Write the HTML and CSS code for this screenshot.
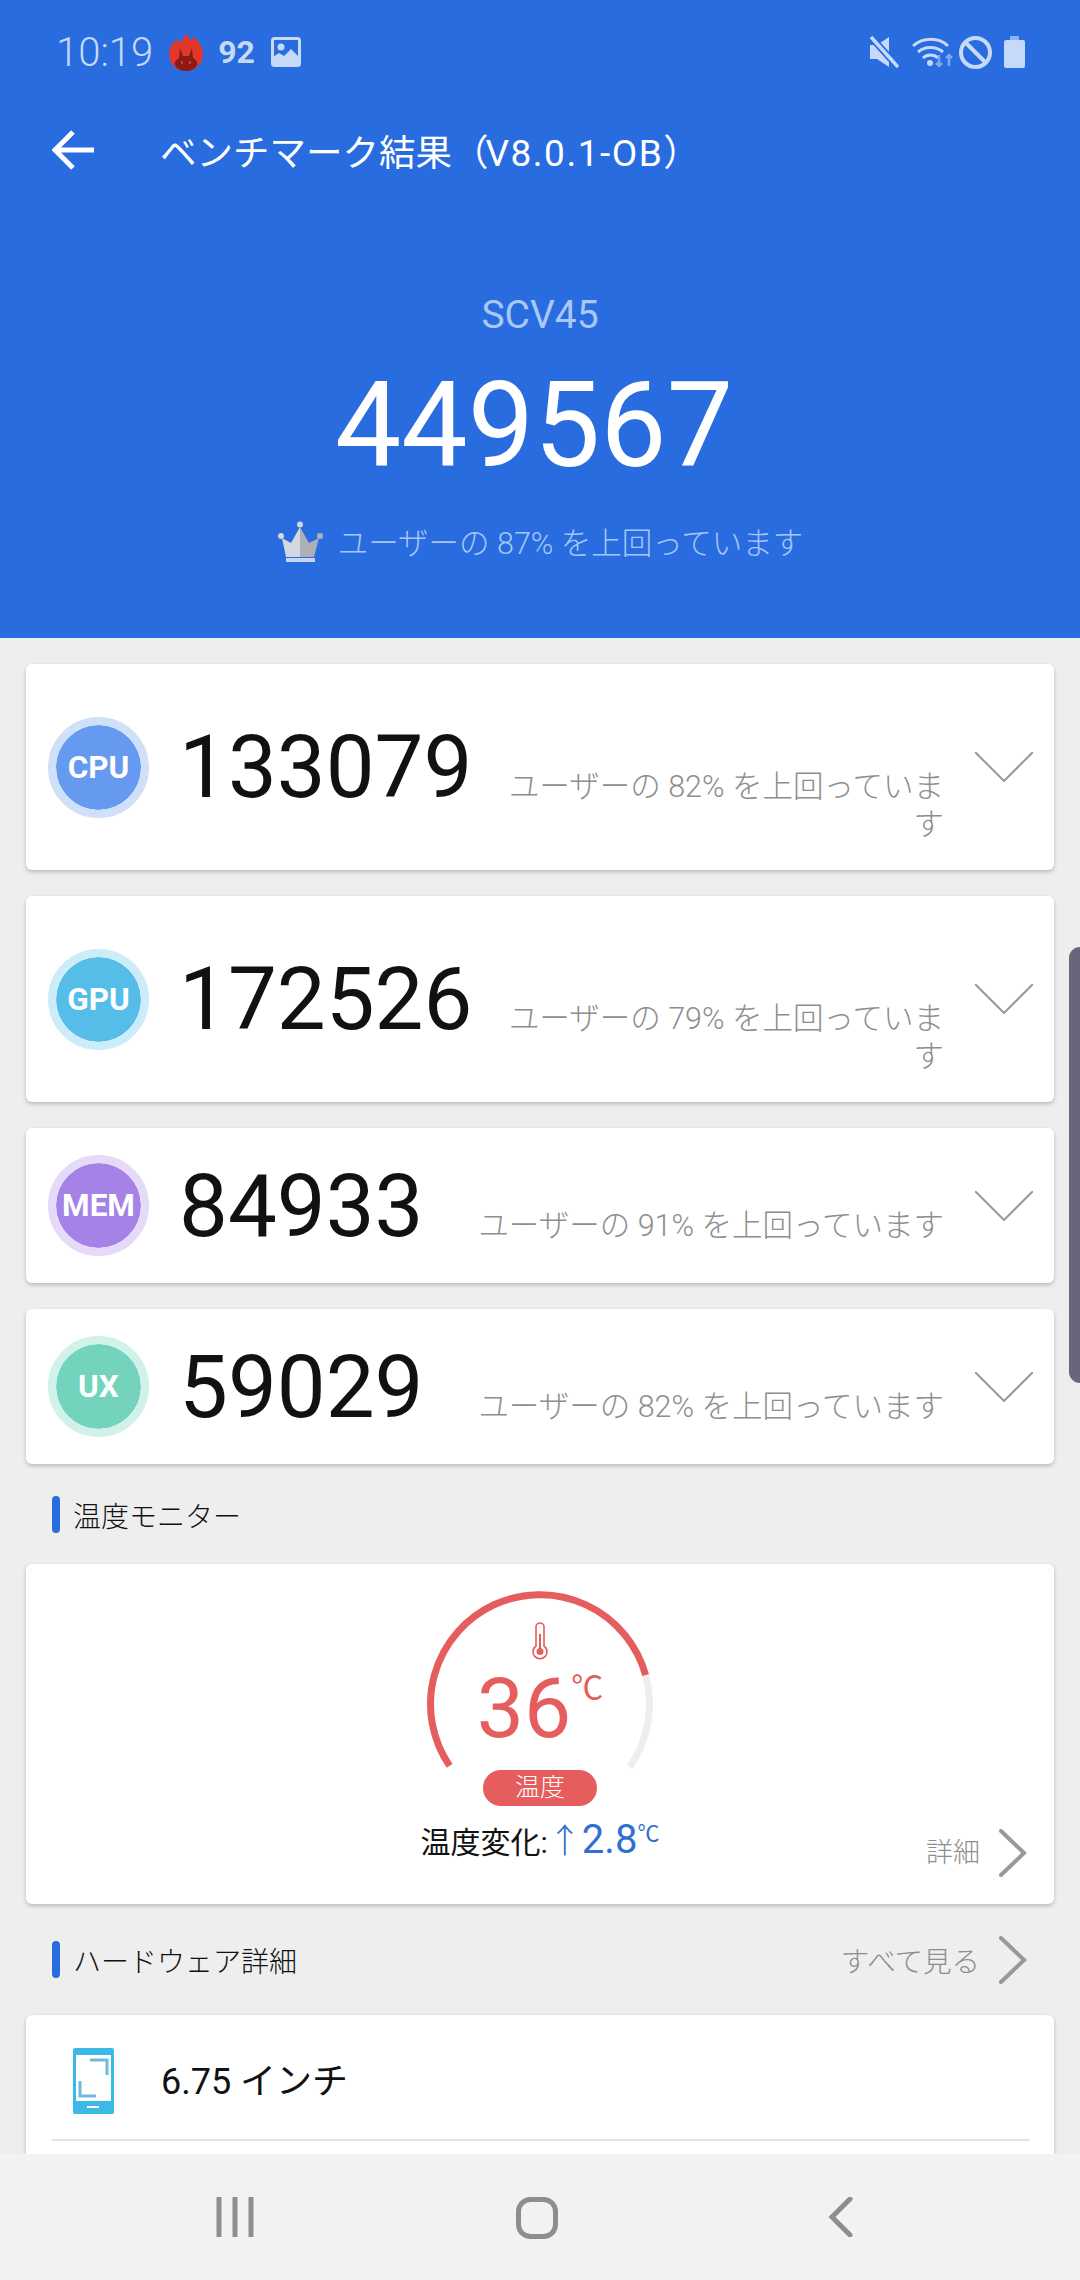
FILE: index.html
```html
<!doctype html>
<html lang="ja">

<head>
    <meta charset="utf-8" />
    <title>ベンチマーク結果</title>

    <link rel="stylesheet" href="styles.css">
</head>

<body>
    <header class="top">
        <div class="status">
            <span class="time">10:19</span>
            <svg class="ic-flame" viewBox="0 0 34 38">
                <path fill="#e2382b" d="M17 0c1 3 3 5 5 7 1-1 2-2 2-3 6 4 10 10 10 17 0 10-8 17-17 17S0 31 0 21C0 14 4 9 9 6c0 2 1 3 2 4 2-3 5-6 6-10z" />
                <path fill="#8c1a14" d="M11 15l3 8h6l3-8 1 10c3 2 5 4 4 7-2 4-6 6-11 6S8 36 6 32c-1-3 1-5 4-7z" />
                <path fill="#e2382b" d="M12 28h2v3h-2zM20 28h2v3h-2z" />
            </svg>
            <span class="level">92</span>
            <svg class="ic-image" viewBox="0 0 30 30">
                <rect x="1.5" y="1.5" width="27" height="27" rx="2" fill="none" stroke="#c6d9f8" stroke-width="3" />
                <circle cx="10" cy="10" r="3.5" fill="#c6d9f8" />
                <path fill="#c6d9f8" d="M2 26v-6l6-4 5 3 7-7 8 8v8H4z" />
            </svg>
            <span class="spacer"></span>
            <svg class="ic-mute" viewBox="0 0 30 34">
                <path fill="#c6d9f8" d="M1 10h7l12-8v30L8 24H1z" />
                <path stroke="#286cdf" stroke-width="7" d="M2 2l27 30" />
                <path stroke="#c6d9f8" stroke-width="3.5" d="M2 2l27 30" />
            </svg>
            <svg class="ic-wifi" viewBox="0 0 42 30">
                <g fill="none" stroke="#c6d9f8" stroke-width="3">
                    <path d="M1 9c10-9 26-9 35 0" />
                    <path d="M6 15c7-6 18-6 25 0" />
                    <path d="M11 21c4-4 11-4 15 0" />
                </g>
                <circle cx="18" cy="26" r="3" fill="#c6d9f8" />
                <path fill="none" stroke="#7fa9ee" stroke-width="2.5" d="M27 18v11m-3-3l3 3 3-3M37 29V18m-3 3l3-3 3 3" />
            </svg>
            <svg class="ic-block" viewBox="0 0 33 33">
                <circle cx="16.5" cy="16.5" r="14.5" fill="none" stroke="#c6d9f8" stroke-width="4" />
                <path stroke="#c6d9f8" stroke-width="4" d="M6 6l21 21" />
            </svg>
            <svg class="ic-battery" viewBox="0 0 21 32">
                <path fill="#8fb2ee" d="M6 0h9v4H6z" />
                <rect y="4" width="21" height="28" rx="2" fill="#c6d9f8" />
            </svg>
        </div>

        <div class="titlebar">
            <svg class="ic-back" viewBox="0 0 42 40">
                <path fill="none" stroke="#fff" stroke-width="5" d="M21 2L3 20l18 18M3 20h39" />
            </svg>
            <span class="title">ベンチマーク結果（<span class="title-ver">V8.0.1-OB</span>）</span>
        </div>

        <div class="device">SCV45</div>
        <div class="total">449567</div>
        <div class="rank">
            <svg class="ic-crown" viewBox="0 0 46 41">
                <circle cx="23" cy="3.5" r="3" fill="#d4d7df" />
                <circle cx="4" cy="15" r="3" fill="#d4d7df" />
                <circle cx="43" cy="15" r="3" fill="#adafb6" />
                <path fill="#d6d8df" d="M5 17l9 5 9-16v30H9z" />
                <path fill="#adafb6" d="M23 6l9 16 10-5-5 19H23z" />
                <path fill="#c5d6f4" d="M9 37h29v4H9z" />
            </svg>
            <span>ユーザーの 87% を上回っています</span>
        </div>
    </header>

    <main class="content">
        <div class="scores">
            <div class="card score-card score-tall">
                <div class="badge badge-cpu">CPU</div>
                <div class="score-row">
                    <span class="score-num">133079</span>
                    <span class="score-sub">ユーザーの 82% を上回っています</span>
                </div>
                <svg class="ic-down" viewBox="0 0 58 30"><path d="M0 0l29 29L58 0" /></svg>
            </div>
            <div class="card score-card score-tall">
                <div class="badge badge-gpu">GPU</div>
                <div class="score-row">
                    <span class="score-num">172526</span>
                    <span class="score-sub">ユーザーの 79% を上回っています</span>
                </div>
                <svg class="ic-down" viewBox="0 0 58 30"><path d="M0 0l29 29L58 0" /></svg>
            </div>
            <div class="card score-card">
                <div class="badge badge-mem">MEM</div>
                <div class="score-row">
                    <span class="score-num">84933</span>
                    <span class="score-sub">ユーザーの 91% を上回っています</span>
                </div>
                <svg class="ic-down" viewBox="0 0 58 30"><path d="M0 0l29 29L58 0" /></svg>
            </div>
            <div class="card score-card">
                <div class="badge badge-ux">UX</div>
                <div class="score-row">
                    <span class="score-num">59029</span>
                    <span class="score-sub">ユーザーの 82% を上回っています</span>
                </div>
                <svg class="ic-down" viewBox="0 0 58 30"><path d="M0 0l29 29L58 0" /></svg>
            </div>
        </div>

        <div class="section section-temp">
            <span class="section-title">温度モニター</span>
        </div>

        <div class="card temp-card">
            <div class="gauge">
                <svg class="gauge-arc" viewBox="0 0 240 182">
                    <path fill="none" stroke="#eeeeee" stroke-width="7" d="M225.6 87.1A109.5 109.5 0 0 1 209.7 178.8" />
                    <path fill="none" stroke="#e55d5d" stroke-width="7" d="M29.6 177.9A109.5 109.5 0 1 1 225.6 87.1" />
                    <path fill="none" stroke="#e55d5d" stroke-width="1.6" d="M116 58V39a4 4 0 0 1 8 0v19a7 7 0 1 1-8 0z" />
                    <path stroke="#e55d5d" stroke-width="2" d="M120 46v16" />
                    <circle cx="120" cy="63.5" r="3.5" fill="#e55d5d" />
                </svg>
                <div class="temp-value">36<span class="temp-unit">℃</span></div>
            </div>
            <div class="temp-pill">温度</div>
            <div class="temp-foot">
                <span class="temp-change">温度変化:<span class="temp-delta"><span class="delta-arrow">↑</span>2.8<span class="delta-unit">℃</span></span></span>
                <span class="link link-detail">詳細
                    <svg class="ic-next" viewBox="0 0 28 48"><path d="M2 2l23 22L2 46" /></svg>
                </span>
            </div>
        </div>

        <div class="section section-hw">
            <span class="section-title">ハードウェア詳細</span>
            <span class="link link-all">すべて見る
                <svg class="ic-next" viewBox="0 0 28 48"><path d="M2 2l23 22L2 46" /></svg>
            </span>
        </div>

        <div class="card hw-card">
            <div class="hw-row">
                <svg class="ic-phone" viewBox="0 0 41 66">
                    <rect width="41" height="66" rx="2" fill="#3db9e8" />
                    <rect x="3" y="7" width="35" height="46" fill="#fff" />
                    <path fill="none" stroke="#6cbbdd" stroke-width="3" d="M17 12h17v15M7 33v15h16" />
                    <path stroke="#fff" stroke-width="2" d="M14 59h12" />
                </svg>
                <span class="hw-text">6.75 インチ</span>
            </div>
        </div>
    </main>

    <div class="scrollbar"></div>

    <nav class="navbar">
        <svg class="nav-recent" viewBox="0 0 38 40">
            <path d="M3 1v38M19 1v38M35 1v38" />
        </svg>
        <svg class="nav-home" viewBox="0 0 42 42">
            <rect x="2.5" y="2.5" width="37" height="37" rx="12" />
        </svg>
        <svg class="nav-back" viewBox="0 0 25 40">
            <path d="M22 2L4 20l18 18" />
        </svg>
    </nav>
</body>

</html>
```

FILE: styles.css
```css
* {
    box-sizing: border-box;
}

body {
    position: relative;
    width: 1080px;
    height: 2280px;
    margin: 0;
    overflow: hidden;
    background-color: #eeeeee;
    font-family: Roboto, "Noto Sans CJK JP", sans-serif;
    color: #111111;
}

svg {
    display: block;
    flex: none;
}

/* blue header */
.top {
    height: 638px;
    padding-top: 26px;
    background-color: #286cdf;
    text-align: center;
}

.status {
    display: flex;
    align-items: center;
    height: 52px;
    padding: 0 55px 0 56px;
    color: #c6d9f8;
}

.time {
    font-size: 40px;
    font-weight: 300;
}

.ic-flame {
    width: 34px;
    height: 38px;
    margin-left: 16px;
}

.level {
    margin-left: 15px;
    font-size: 32px;
    font-weight: 700;
}

.ic-image {
    width: 30px;
    height: 30px;
    margin-left: 16px;
}

.spacer {
    flex: 1;
}

.ic-mute {
    width: 30px;
    height: 34px;
}

.ic-wifi {
    width: 42px;
    height: 30px;
    margin-left: 13px;
}

.ic-block {
    width: 33px;
    height: 33px;
    margin-left: 5px;
}

.ic-battery {
    width: 21px;
    height: 32px;
    margin-left: 12px;
}

.titlebar {
    display: flex;
    align-items: center;
    height: 52px;
    margin-top: 46px;
    padding-left: 52px;
    color: #ffffff;
}

.ic-back {
    width: 42px;
    height: 40px;
}

.title {
    margin-left: 66px;
    font-size: 36.5px;
}

.title-ver {
    margin-left: -3px;
    font-size: 37px;
    letter-spacing: 1.5px;
}

.device {
    margin-top: 116px;
    font-size: 39px;
    line-height: 46px;
    color: #a9c8f7;
}

.total {
    margin-top: 18px;
    margin-right: 12px;
    font-size: 118px;
    line-height: 140px;
    color: #ffffff;
}

.rank {
    display: flex;
    justify-content: center;
    align-items: center;
    height: 44px;
    margin-top: 23px;
    font-size: 30.5px;
    font-weight: 300;
    color: #a6c6f7;
}

.ic-crown {
    width: 46px;
    height: 41px;
    margin-right: 15px;
}

/* cards */
.content {
    padding: 26px 26px 0;
}

.card {
    background-color: #ffffff;
    border-radius: 6px;
    box-shadow: 0 2px 4px rgba(0, 0, 0, 0.22);
}

.scores {
    display: flex;
    flex-direction: column;
    gap: 26px;
}

.score-card {
    display: flex;
    align-items: center;
    height: 155px;
    padding: 0 21px 0 22px;
}

.score-tall {
    height: 206px;
}

.badge {
    display: flex;
    justify-content: center;
    align-items: center;
    flex: none;
    width: 101px;
    height: 101px;
    border: 8px solid;
    border-radius: 50%;
    background-clip: padding-box;
    font-size: 31.5px;
    font-weight: 700;
    color: #ffffff;
}

.badge-cpu {
    background-color: #6699f0;
    border-color: #d0e0f9;
}

.badge-gpu {
    background-color: #56bde9;
    border-color: #ccecf9;
}

.badge-mem {
    background-color: #a583e6;
    border-color: #e5daf8;
}

.badge-ux {
    background-color: #73d3bd;
    border-color: #d1f2ea;
}

.score-row {
    display: flex;
    align-items: baseline;
    flex: 1;
    height: 102px;
    margin-left: 30px;
}

.score-num {
    flex: none;
    font-size: 87px;
    line-height: 102px;
}

.score-sub {
    flex: 1;
    margin-left: 30px;
    font-size: 30.5px;
    font-weight: 300;
    line-height: 38px;
    text-align: right;
    color: #8e8e8e;
}

.ic-down {
    width: 58px;
    height: 30px;
    margin-left: 31px;
}

.ic-down path {
    fill: none;
    stroke: #999999;
    stroke-width: 2;
}

/* section headings */
.section {
    display: flex;
    justify-content: space-between;
    align-items: center;
    padding: 0 27px 0 26px;
}

.section-temp {
    height: 37px;
    margin: 32px 0 31px;
}

.section-hw {
    height: 37px;
    margin: 37px 0;
}

.section-title {
    display: flex;
    align-items: center;
    font-size: 28px;
    font-weight: 300;
    color: #111111;
}

.section-title::before {
    content: "";
    width: 8px;
    height: 37px;
    margin-right: 13px;
    border-radius: 4px;
    background-color: #286cdf;
}

.link {
    display: flex;
    align-items: center;
    gap: 19px;
    font-size: 27px;
    font-weight: 300;
    color: #8e8e8e;
}

.link-all {
    font-size: 28.5px;
}

.ic-next {
    width: 28px;
    height: 48px;
}

.ic-next path {
    fill: none;
    stroke: #999999;
    stroke-width: 4;
    stroke-linecap: round;
}

/* temperature */
.temp-card {
    height: 340px;
    padding-top: 24px;
}

.gauge {
    display: grid;
    justify-content: center;
}

.gauge-arc,
.temp-value {
    grid-area: 1 / 1;
}

.gauge-arc {
    width: 240px;
    height: 182px;
}

.temp-value {
    height: 100px;
    margin-top: 50px;
    font-size: 84px;
    line-height: 100px;
    text-align: center;
    color: #e55d5d;
}

.temp-unit {
    font-size: 32px;
    vertical-align: 38px;
}

.temp-pill {
    width: 114px;
    height: 36px;
    margin: 0 auto;
    border-radius: 18px;
    background-color: #e55d5d;
    font-size: 25px;
    font-weight: 300;
    line-height: 36px;
    text-align: center;
    color: #ffffff;
}

.temp-foot {
    display: grid;
    grid-template-columns: 1fr auto 1fr;
    align-items: start;
    margin-top: 9px;
}

.temp-change {
    grid-column: 2;
    font-size: 30px;
    line-height: 38px;
    white-space: nowrap;
}

.temp-delta {
    font-size: 40px;
    color: #2f6fce;
}

.delta-arrow {
    font-size: 34px;
    font-weight: 300;
}

.delta-unit {
    font-size: 22px;
    vertical-align: 12px;
}

.link-detail {
    grid-column: 3;
    justify-self: end;
    margin: 8px 27px 0 0;
}

.link-detail .ic-next {
    margin-top: 6px;
}

/* hardware */
.hw-card {
    height: 300px;
}

.hw-row {
    display: flex;
    align-items: center;
    height: 126px;
    margin: 0 24px 0 26px;
    padding: 32px 0 24px 21px;
    border-bottom: 2px solid #e4e4e4;
}

.ic-phone {
    width: 41px;
    height: 66px;
}

.hw-text {
    margin: 0 0 6px 47px;
    font-size: 36px;
}

/* things lying over the page */
.scrollbar {
    position: absolute;
    top: 947px;
    right: 0;
    width: 11px;
    height: 436px;
    border-radius: 12px 0 0 12px;
    background-color: #67667a;
}

.navbar {
    position: absolute;
    left: 0;
    bottom: 0;
    width: 100%;
    height: 126px;
    background-color: #f2f2f2;
}

.navbar svg {
    position: absolute;
    top: 43px;
}

.navbar path,
.navbar rect {
    fill: none;
    stroke: #8e8e8e;
    stroke-width: 5;
    stroke-linecap: round;
}

.nav-recent {
    left: 216px;
    width: 38px;
    height: 40px;
}

.nav-home {
    left: 516px;
    width: 42px;
    height: 42px;
}

.nav-back {
    left: 828px;
    width: 25px;
    height: 40px;
}
```
